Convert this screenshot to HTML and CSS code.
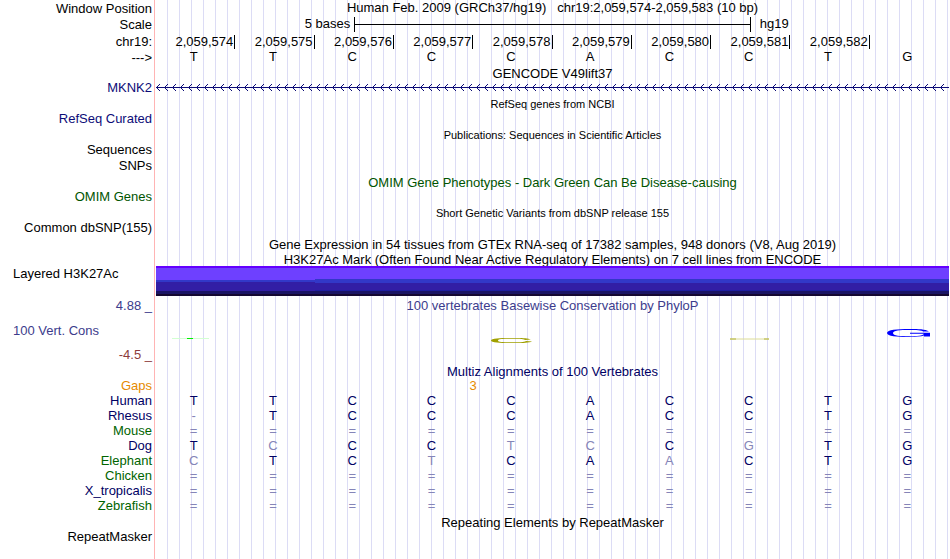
FILE: index.html
```
<!DOCTYPE html>
<html lang="en">
<head>
<meta charset="utf-8">
<title>Human chr19:2,059,574-2,059,583</title>
<link rel="stylesheet" href="styles.css">
</head>
<body>
<main class="browser" id="browser"></main>
<script src="tracks.js"></script>
</body>
</html>
```
FILE: styles.css
```
* { box-sizing: border-box; }

body {
  margin: 0;
  background: #fff;
  color: #000;
  font: 13px/15px "Liberation Sans", Arial, sans-serif;
}

.browser {
  min-height: 100vh;
  padding-right: 1px;
  background:
    linear-gradient(#ffb4b4, #ffb4b4) 154px 0 / 1px 100% no-repeat,
    repeating-linear-gradient(to right, transparent 0 11px, #dcdcf5 11px 12px) 156px 0 / 100% 100% no-repeat;
}

.row {
  display: grid;
  grid-template-columns: 152px minmax(0, 1fr);
  column-gap: 4px;
  min-height: 15px;
}

.label { text-align: right; white-space: nowrap; }
.label.left { text-align: left; padding-left: 13px; }

.head { min-height: 17px; line-height: 18px; }
.head.first { min-height: 16px; }
.head.strand { min-height: 16px; line-height: 16px; }
.head .label { height: 16px; }
.head.strand .bases { line-height: 14px; }
.tall { min-height: 16px; line-height: 17px; }
.tall .label { height: 16px; }

.title {
  margin: 0;
  height: 14px;
  text-align: center;
  font-size: 13px;
  font-weight: normal;
  line-height: 16px;
  white-space: pre;
}
.row.title-row { min-height: 14px; padding-top: 2px; box-sizing: content-box; }
.row.title-row .label { height: 14px; }
.row.title-row.tight { padding-top: 0; }
.row.title-row.close { padding-top: 1px; }
.title.small { font-size: 11px; line-height: 14px; }

.scale { display: grid; grid-template-columns: 1fr 2fr 1fr; line-height: 16px; }
.scale .from { text-align: right; padding-right: 4px; }
.scale .to { padding-left: 9px; }
.scale .bar { height: 15px; margin-top: 1px; border: solid #000; border-width: 0 1px; display: flex; align-items: center; }
.scale .bar::before { content: ""; flex: 1; height: 1px; background: #000; }

.bases, .ticks { display: grid; grid-template-columns: repeat(10, minmax(0, 1fr)); }
.bases span { text-align: center; padding-right: 4px; }
.bases .dim { color: #8585b8; }
.bases .gap { grid-column: 1 / span 8; padding-right: 0; }
.ticks span { height: 14px; margin-top: 2px; line-height: 14px; text-align: right; padding-right: 1px; border-right: 1px solid #000; }
.ticks span:last-child { border: 0; }

.navy { color: #0c0c78; }
.blue { color: #000064; }
.green { color: #005400; }
.leaf { color: #006400; }
.orange { color: #e68a00; }
.cons { color: #3c3c8c; }
.neg { color: #8c3c3c; }

.gene { display: block; width: 100%; height: 15px; }

.signal { display: block; width: 100%; height: 30px; }

.plot { display: grid; grid-template-columns: repeat(10, minmax(0, 1fr)); height: 50px; }
.plot svg { width: 40px; height: 50px; justify-self: center; overflow: visible; }
.conservation { height: 66px; }
.conservation .labels { display: flex; flex-direction: column; justify-content: space-between; padding: 2px 0 0; }
.conservation .title { height: 16px; padding-top: 2px; }
```
FILE: tracks.js
```
const root = document.getElementById('browser');

function row(label, content, cls = '', labelCls = '') {
  root.insertAdjacentHTML('beforeend',
    `<div class="row ${cls}"><div class="label ${labelCls}">${label}</div>${content}</div>`);
}
function title(text, cls = '', rowCls = '') {
  row('', `<h2 class="title ${cls}">${text}</h2>`, 'title-row ' + rowCls);
}
// Lower-case letters, gaps and double lines are drawn dimmed.
function bases(seq) {
  return '<div class="bases">' + [...seq].map(c =>
    `<span${/[a-z=-]/.test(c) ? ' class="dim"' : ''}>${c.toUpperCase()}</span>`).join('') + '</div>';
}

row('Window Position', '<h1 class="title">Human Feb. 2009 (GRCh37/hg19)   chr19:2,059,574-2,059,583 (10 bp)</h1>', 'head first');
row('Scale', '<div class="scale"><span class="from">5 bases</span><span class="bar"></span><span class="to">hg19</span></div>', 'head');
let ticks = '';
for (let n = 574; n < 583; n++) ticks += `<span>2,059,${n}</span>`;
row('chr19:', `<div class="ticks">${ticks}<span></span></div>`, 'head');
row('---&gt;', bases('TTCCCACCTG'), 'head strand');

title('GENCODE V49lift37', '', 'tight');
row('MKNK2', `<svg class="gene" aria-hidden="true" shape-rendering="crispEdges"><defs><pattern id="arrows" width="8" height="15" patternUnits="userSpaceOnUse"><path d="M0 7h1v1h-1zM1 6h1v3h-1zM2 5h1v1h-1zM2 9h1v1h-1zM3 4h1v1h-1zM3 10h1v1h-1z" fill="#0c0c78"/></pattern></defs><rect width="100%" height="15" fill="url(#arrows)"/><rect y="7" width="100%" height="1" fill="#0c0c78"/></svg>`, '', 'navy');
title('RefSeq genes from NCBI', 'small');
row('RefSeq Curated', '', '', 'navy');
title('Publications: Sequences in Scientific Articles', 'small');
row('Sequences', '');
row('SNPs', '', 'tall');
title('OMIM Gene Phenotypes - Dark Green Can Be Disease-causing', 'green');
row('OMIM Genes', '', '', 'green');
title('Short Genetic Variants from dbSNP release 155', 'small');
row('Common dbSNP(155)', '');
title('Gene Expression in 54 tissues from GTEx RNA-seq of 17382 samples, 948 donors (V8, Aug 2019)');
title('H3K27Ac Mark (Often Found Near Active Regulatory Elements) on 7 cell lines from ENCODE', '', 'close');
row('Layered H3K27Ac', `<svg class="signal" aria-hidden="true" shape-rendering="crispEdges">
<rect width="100%" height="30" fill="#140832"/><rect width="100%" height="28" fill="#1a1464"/>
<rect width="100%" height="25" fill="#321ea5"/><rect width="100%" height="17" fill="#3238c8"/>
<rect y="16" width="20%" height="1" fill="#321ea5"/><rect x="20%" y="24" width="80%" height="1" fill="#1e1ea0"/>
<rect width="100%" height="13" fill="#6e40ff"/><rect width="20%" height="14" fill="#6e40ff"/><rect width="100%" height="2" fill="#6400ff"/></svg>`, '', 'left');

row('', '', 'conservation');
root.lastElementChild.innerHTML = `
<div class="labels"><div class="label cons">4.88 _</div><div class="label left cons">100 Vert. Cons</div><div class="label neg">-4.5 _</div></div>
<div><h2 class="title cons">100 vertebrates Basewise Conservation by PhyloP</h2>
<div class="plot" aria-hidden="true">
<svg><path d="M-4 26.5H33" stroke="#d2ffd2"/><path d="M11 26.5H17" stroke="#00f000"/></svg>
<i></i><i></i><i></i>
<svg><path d="M38 27.6C34 25.5 24 26 18 26C8 26 -2 26.4 -2 28.5S8 31 18 31C26 31 36 31.2 39 29.5L33 29C31 30.3 26 30.3 18 30.3C10 30.3 5 30 5 28.5S10 26.8 18 26.8C25 26.8 30 26.8 32 28Z" fill="#a0a000"/></svg>
<i></i><i></i>
<svg><path d="M-1 27H38" stroke="#dcdc96"/><path d="M-1 27H5M33 27H38" stroke="#b4b43c"/></svg>
<i></i>
<svg><path d="M40 19.5C36 16.8 26 17 20 17C8 17 -2 17.8 -2 21S8 25 20 25C27 25 32 24.6 35 23.6V24.5H41V20.8H21V21.8H35C34 24 28 24.2 20 24.2C11 24.2 4 23.8 4 21S11 17.9 20 17.9C27 17.9 33 18 34 19.5Z" fill="#00f"/></svg>
</div></div>`;

title('Multiz Alignments of 100 Vertebrates', 'blue');
row('Gaps', '<div class="bases orange"><span class="gap">3</span></div>', '', 'orange');
[['Human', 'TTCCCACCTG', 'blue'],
 ['Rhesus', '-TCCCACCTG', 'blue'],
 ['Mouse', '==========', 'leaf'],
 ['Dog', 'TcCCtcCgTG', 'blue'],
 ['Elephant', 'cTCtCAaCTG', 'leaf'],
 ['Chicken', '==========', 'leaf'],
 ['X_tropicalis', '==========', 'blue'],
 ['Zebrafish', '==========', 'leaf']
].forEach(([name, seq, color]) => row(name, bases(seq), 'blue', color));
title('Repeating Elements by RepeatMasker');
row('RepeatMasker', '');
```
